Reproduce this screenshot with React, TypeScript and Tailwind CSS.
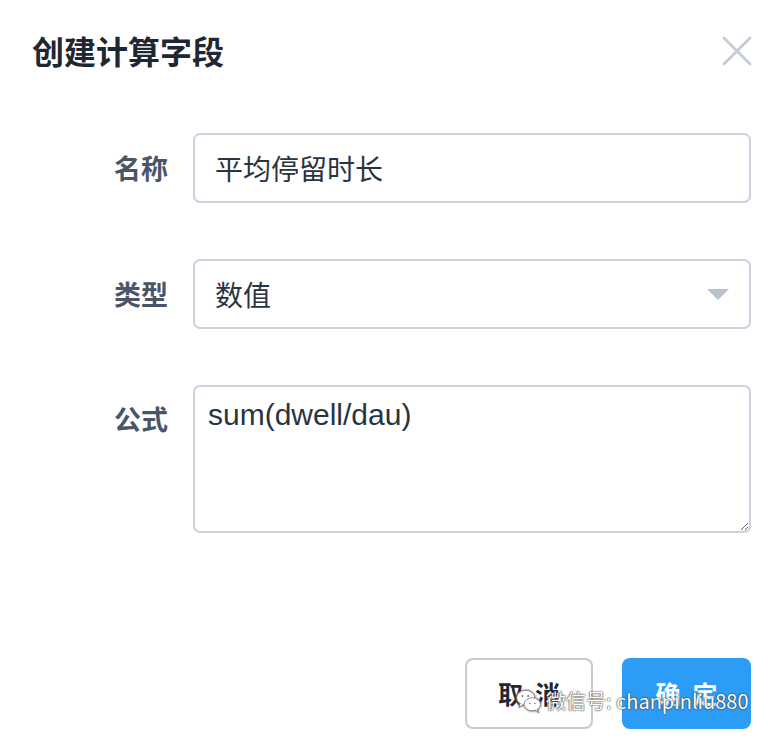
import React from "react";

const cjk = { fontFamily: '"Noto Sans CJK SC", "Noto Sans", sans-serif' };
const latin = { fontFamily: '"Liberation Sans", "Noto Sans CJK SC", sans-serif' };

export default function App() {
  return (
    <div className="relative w-[768px] h-[738px] bg-white overflow-hidden" style={cjk}>
      <div className="flex flex-col">
        {/* Header */}
        <div className="flex items-center justify-between pl-[32px] pr-[16px] pt-[30px] h-[70px]">
          <h1 className="text-[32px] leading-[40px] font-bold text-[#1f2733]">创建计算字段</h1>
          <svg width="30" height="30" viewBox="0 0 30 30" className="mt-[2px]">
            <path d="M2 2 L28 28 M28 2 L2 28" stroke="#c3ccd7" strokeWidth="2.8" strokeLinecap="round" />
          </svg>
        </div>

        {/* Form */}
        <div className="flex flex-col gap-[56px] mt-[63px] pr-[17px]">
          <div className="flex items-center gap-[25px]">
            <label className="w-[168px] text-right text-[27px] font-bold text-[#4a5568]">名称</label>
            <div className="flex-1 h-[70px] border-2 border-[#c9d2dd] rounded-[7px] flex items-center px-[20px] text-[28px] text-[#2a3441]">
              平均停留时长
            </div>
          </div>
          <div className="flex items-center gap-[25px]">
            <label className="w-[168px] text-right text-[27px] font-bold text-[#4a5568]">类型</label>
            <div className="flex-1 h-[70px] border-2 border-[#c9d2dd] rounded-[7px] flex items-center justify-between pl-[20px] pr-[20px] text-[28px] text-[#2a3441]">
              <span>数值</span>
              <svg width="22" height="11" viewBox="0 0 22 11">
                <path d="M0 0 H22 L11 11 Z" fill="#b9c3ce" />
              </svg>
            </div>
          </div>
          <div className="flex items-start gap-[25px]">
            <label className="w-[168px] text-right text-[27px] font-bold text-[#4a5568] mt-[14px]">公式</label>
            <textarea
              readOnly
              defaultValue="sum(dwell/dau)"
              className="flex-1 h-[148px] border-2 border-[#c9d2dd] rounded-[7px] px-[13px] pt-[10px] text-[30px] leading-[36px] text-[#2a3441] outline-none resize-y"
              style={latin}
            />
          </div>
        </div>

        {/* Footer */}
        <div className="flex justify-end gap-[29px] mt-[125px] pr-[17px]">
          <button className="w-[128px] h-[71px] border-2 border-[#cacaca] rounded-[8px] bg-white text-[25px] font-bold text-[#1f2733] tracking-[12px] pl-[12px]">
            取消
          </button>
          <button className="w-[129px] h-[71px] rounded-[8px] bg-[#2c9cf6] text-[25px] font-bold text-white tracking-[12px] pl-[12px]">
            确定
          </button>
        </div>
      </div>

      {/* Watermark overlay */}
      <div className="absolute left-[515px] top-[686px] flex items-center gap-[3px]">
        <svg width="28" height="30" viewBox="0 0 34 34" className="[filter:drop-shadow(0_0_1px_#666)]">
          <ellipse cx="13" cy="13" rx="11" ry="9" fill="white" stroke="#777" strokeWidth="1" />
          <path d="M6 20 L5 25 L10 21" fill="white" stroke="#777" strokeWidth="1" />
          <ellipse cx="21" cy="21" rx="10" ry="8" fill="white" stroke="#777" strokeWidth="1" />
          <path d="M27 27 L29 31 L24 28" fill="white" stroke="#777" strokeWidth="1" />
          <circle cx="9" cy="11" r="1.2" fill="#777" />
          <circle cx="16" cy="11" r="1.2" fill="#777" />
          <circle cx="18" cy="20" r="1" fill="#777" />
          <circle cx="24" cy="20" r="1" fill="#777" />
        </svg>
        <span
          className="text-[20px] text-white leading-none [text-shadow:0_0_2px_#333,0_0_1px_#333]"
          style={cjk}
        >
          微信号: chanpinliu880
        </span>
      </div>
    </div>
  );
}
